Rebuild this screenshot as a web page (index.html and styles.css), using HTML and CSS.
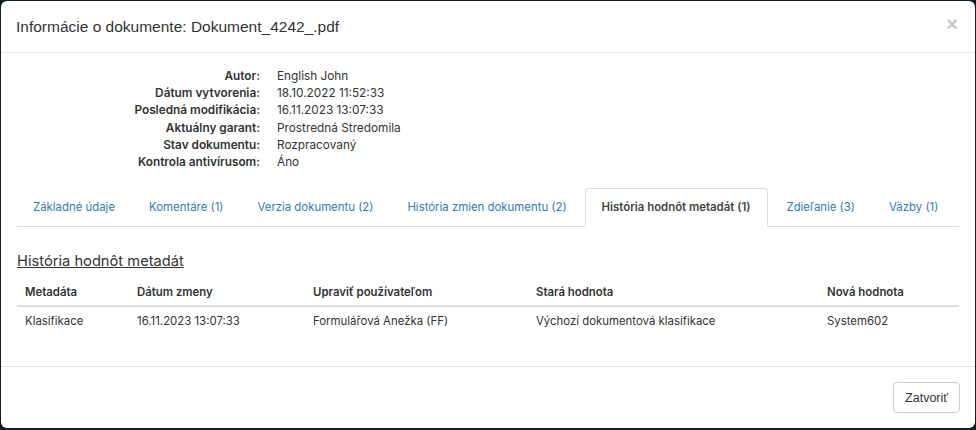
FILE: index.html
```html
<!DOCTYPE html>
<html>
<head>
<meta charset="UTF-8">
<title>Informácie o dokumente</title>
<link rel="stylesheet" href="styles.css">
</head>
<body>
    <div class="modal">
        <div class="modal-header">
            <h4 class="modal-title">Informácie o dokumente: Dokument_4242_.pdf</h4>
            <button class="close">&times;</button>
        </div>
        <div class="modal-body">
            <dl class="doc-info">
                <dt>Autor:</dt><dd>English John</dd>
                <dt>Dátum vytvorenia:</dt><dd>18.10.2022 11:52:33</dd>
                <dt>Posledná modifikácia:</dt><dd>16.11.2023 13:07:33</dd>
                <dt>Aktuálny garant:</dt><dd>Prostredná Stredomila</dd>
                <dt>Stav dokumentu:</dt><dd>Rozpracovaný</dd>
                <dt>Kontrola antivírusom:</dt><dd>Áno</dd>
            </dl>

            <ul class="nav-tabs">
                <li><a href="#">Základné údaje</a></li>
                <li><a href="#">Komentáre (1)</a></li>
                <li><a href="#">Verzia dokumentu (2)</a></li>
                <li><a href="#">História zmien dokumentu (2)</a></li>
                <li class="active"><a href="#">História hodnôt metadát (1)</a></li>
                <li><a href="#">Zdieľanie (3)</a></li>
                <li><a href="#">Väzby (1)</a></li>
            </ul>

            <div class="tab-content">
                <h5 class="section-title">História hodnôt metadát</h5>
                <table class="table">
                    <thead>
                        <tr>
                            <th class="col-meta">Metadáta</th>
                            <th class="col-date">Dátum zmeny</th>
                            <th class="col-user">Upraviť používateľom</th>
                            <th class="col-old">Stará hodnota</th>
                            <th>Nová hodnota</th>
                        </tr>
                    </thead>
                    <tbody>
                        <tr>
                            <td>Klasifikace</td>
                            <td>16.11.2023 13:07:33</td>
                            <td>Formulářová Anežka (FF)</td>
                            <td>Výchozí dokumentová klasifikace</td>
                            <td>System602</td>
                        </tr>
                    </tbody>
                </table>
            </div>
        </div>
        <div class="modal-footer">
            <button class="btn">Zatvoriť</button>
        </div>
    </div>
</body>
</html>
```

FILE: styles.css
```css
body {
    background-color: #0f1d24;
    margin: 0;
    font-family: Inter, "Liberation Sans", sans-serif;
    font-size: 11.8px;
    color: #333333;
}
.modal {
    margin: 1px;
    height: 427px;
    background-color: #ffffff;
    border-radius: 6px;
    display: flex;
    flex-direction: column;
    overflow: hidden;
}
.modal-header {
    flex-shrink: 0;
    height: 51px;
    padding: 0 16px 0 15px;
    border-bottom: 1px solid #e5e5e5;
    display: flex;
    align-items: center;
    justify-content: space-between;
}
.modal-title {
    margin: 0;
    font-family: "Liberation Sans", Arial, sans-serif;
    font-size: 15.5px;
    font-weight: normal;
    color: #333333;
}
.close {
    border: 0;
    background: none;
    padding: 0 0 4px 0;
    font-family: "Liberation Sans", Arial, sans-serif;
    font-size: 20px;
    font-weight: bold;
    color: #c8c8c8;
    margin-right: 1px;
    cursor: pointer;
}
.modal-body {
    flex: 1;
    padding: 15px 16px 0 16px;
}
.doc-info {
    display: grid;
    grid-template-columns: 243px auto;
    column-gap: 17px;
    margin: 0;
    line-height: 17.2px;
}
.doc-info dt {
    text-align: right;
    font-weight: 600;
}
.doc-info dd {
    margin: 0;
}
.nav-tabs {
    list-style: none;
    margin: 17px 0 0 0;
    padding: 0;
    display: flex;
    border-bottom: 1px solid #dddddd;
    white-space: nowrap;
    font-size: 11.4px;
}
.nav-tabs li {
    margin-right: 2px;
    margin-bottom: -1px;
}
.nav-tabs a {
    display: block;
    padding: 0 15px;
    line-height: 37px;
    color: #337ab7;
    text-decoration: none;
    border: 1px solid transparent;
    border-radius: 4px 4px 0 0;
}
.nav-tabs .active a {
    padding: 0 17px 0 16px;
    color: #444444;
    font-weight: 600;
    border-color: #dddddd;
    border-bottom-color: #ffffff;
}
.section-title {
    margin: 24px 0 0 0;
    font-size: 14.7px;
    font-weight: normal;
    text-decoration: underline;
    line-height: 20px;
}
.table {
    width: 100%;
    border-collapse: collapse;
    margin-top: 7px;
    font-size: 11.4px;
}
.table th,
.table td {
    padding: 0 8px;
    text-align: left;
}
.table th {
    font-weight: 600;
    height: 27px;
    border-bottom: 2px solid #dddddd;
}
.table td {
    height: 28px;
}
.col-meta { width: 96px; }
.col-date { width: 160px; }
.col-user { width: 207px; }
.col-old { width: 275px; }
.modal-footer {
    flex-shrink: 0;
    border-top: 1px solid #e5e5e5;
    padding: 15px;
    display: flex;
    justify-content: flex-end;
}
.btn {
    background-color: #ffffff;
    border: 1px solid #cccccc;
    border-radius: 4px;
    height: 31px;
    padding: 0 11px;
    font-family: "Liberation Sans", Arial, sans-serif;
    font-size: 12.5px;
    color: #333333;
    cursor: pointer;
}
```
